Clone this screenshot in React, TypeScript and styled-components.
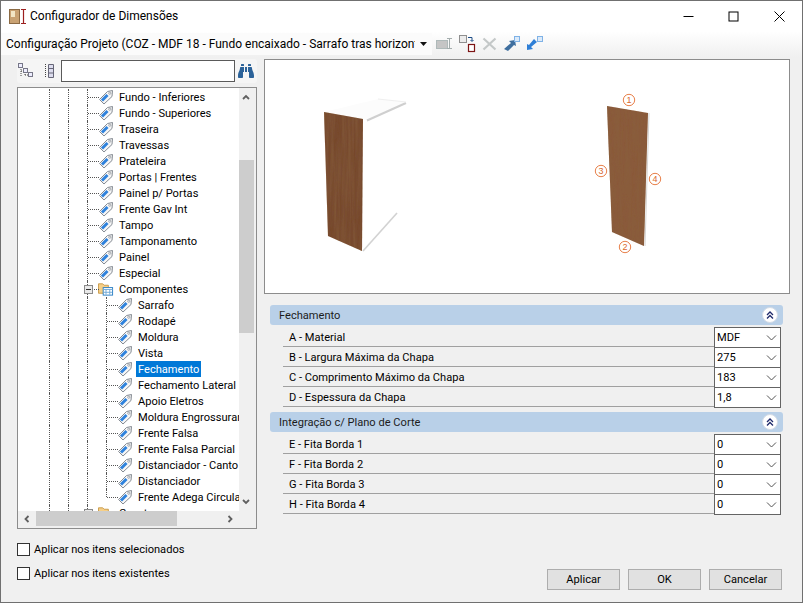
import React from 'react';
import styled, {createGlobalStyle} from 'styled-components';
import {FaBinoculars} from 'react-icons/fa';

const GlobalStyle = createGlobalStyle`
  html, body {
    margin: 0;
    padding: 0;
    background: #f0f0f0;
  }
  body {
    font-family: Roboto, "Liberation Sans", sans-serif;
    font-size: 11.1px;
    color: #000;
  }
`;

const Window = styled.div`
  box-sizing: border-box;
  width: 803px;
  height: 603px;
  display: flex;
  flex-direction: column;
  border: 1px solid #707070;
  background: #f0f0f0;
  overflow: hidden;
`;

const TitleBar = styled.div`
  height: 30px;
  flex: none;
  display: flex;
  align-items: center;
  background: #fff;
  padding-left: 8px;
  font-size: 12px;
`;

const TitleText = styled.span`
  flex: 1;
  margin-left: 3px;
`;

const WinButton = styled.div`
  width: 45.5px;
  height: 30px;
  display: flex;
  align-items: center;
  justify-content: center;
`;

const Toolbar = styled.div`
  height: 26px;
  flex: none;
  display: flex;
  align-items: center;
  background: linear-gradient(#fff, #f0f0f0);
`;

const ProjectCombo = styled.div`
  width: 431px;
  height: 22px;
  flex: none;
  display: flex;
  align-items: center;
  justify-content: space-between;
  background: #fbfbfb;
  padding: 0 5px;
  box-sizing: border-box;
  font-size: 12px;
  white-space: nowrap;
  overflow: hidden;
`;

const ProjectText = styled.span`
  width: 409px;
  overflow: hidden;
`;

const ToolIcons = styled.div`
  display: flex;
  align-items: center;
  gap: 6px;
  margin-left: 4px;
`;

const Body = styled.div`
  flex: 1;
  display: flex;
  min-height: 0;
  padding-left: 16px;
`;

const LeftColumn = styled.div`
  width: 240px;
  flex: none;
  display: flex;
  flex-direction: column;
`;

const SearchRow = styled.div`
  height: 24px;
  margin-top: 2px;
  display: flex;
  align-items: center;
  background: #f5f5f5;
  border-radius: 3px;
`;

const SearchInput = styled.div`
  box-sizing: border-box;
  width: 174px;
  height: 22px;
  margin-left: 6px;
  border: 1px solid #5a5a5a;
  background: #fff;
`;

const SearchIcon = styled.div`
  display: flex;
  margin-left: 3px;
  color: #2b6299;
`;

const Tree = styled.div`
  box-sizing: border-box;
  width: 240px;
  height: 442px;
  margin-top: 4px;
  border: 1px solid #8c8c8c;
  background: #fff;
  display: grid;
  grid-template-columns: 221px 17px;
  grid-template-rows: 423px 17px;
`;

const TreeView = styled.div`
  overflow: hidden;
  padding: 1px 0 0 31px;
`;

const TreeRowBox = styled.div`
  height: 16px;
  display: flex;
  white-space: nowrap;
`;

const Guide = styled.span`
  width: 19px;
  height: 16px;
  flex: none;
  box-sizing: border-box;
  border-left: 1px dotted #555;
`;

const Branch = styled.span<{$last?: boolean}>`
  position: relative;
  width: 11px;
  height: ${p => (p.$last ? '8px' : '16px')};
  flex: none;
  box-sizing: border-box;
  border-left: 1px dotted #555;
  &::after {
    content: '';
    position: absolute;
    left: 0;
    top: 8px;
    width: 11px;
    border-top: 1px dotted #555;
  }
`;

const Expander = styled.span`
  position: absolute;
  left: -4px;
  top: 4px;
  z-index: 1;
  box-sizing: border-box;
  width: 9px;
  height: 9px;
  border: 1px solid #8a8a8a;
  background: #e9e9e9;
  display: flex;
  align-items: center;
  justify-content: center;
  &::before {
    content: '';
    width: 5px;
    border-top: 1px solid #333;
  }
`;

const TreeLabel = styled.span<{$selected?: boolean}>`
  box-sizing: border-box;
  height: 16px;
  line-height: 15px;
  padding: 1px 2px 0;
  margin-left: 3px;
  background: ${p => (p.$selected ? '#0078d7' : 'transparent')};
  color: ${p => (p.$selected ? '#fff' : '#000')};
`;

const VScroll = styled.div`
  background: #f0f0f0;
  display: flex;
  flex-direction: column;
  align-items: center;
  position: relative;
`;

const VThumb = styled.div`
  width: 15px;
  height: 173px;
  margin-top: 72px;
  margin-right: 2px;
  background: #cdcdcd;
`;

const ScrollArrow = styled.div<{$at: string}>`
  position: absolute;
  display: flex;
  ${p => p.$at};
`;

const HScroll = styled.div`
  grid-column: 1 / 3;
  background: #f0f0f0;
  position: relative;
`;

const HThumb = styled.div`
  width: 141px;
  height: 15px;
  margin-left: 18px;
  background: #cdcdcd;
`;

const Options = styled.div`
  display: flex;
  flex-direction: column;
  gap: 11px;
  margin-top: 14px;
`;

const Option = styled.label`
  display: flex;
  align-items: center;
  gap: 4px;
  height: 13px;
`;

const CheckBox = styled.span`
  box-sizing: border-box;
  width: 13px;
  height: 13px;
  border: 1px solid #333;
  background: #fff;
`;

const RightColumn = styled.div`
  flex: 1;
  display: flex;
  flex-direction: column;
  margin-left: 7px;
  min-width: 0;
`;

const Preview = styled.div`
  box-sizing: border-box;
  width: 526px;
  height: 235px;
  margin-top: 2px;
  border: 1px solid #8c8c8c;
  background: #fff;
  flex: none;
`;

const PreviewArt = styled.svg`
  display: block;
  width: 524px;
  height: 233px;
`;

const Sections = styled.div`
  margin: 11px 0 0 6px;
  width: 513px;
`;

const SectionBox = styled.div`
  margin-bottom: 5px;
`;

const SectionHeader = styled.div`
  height: 20px;
  display: flex;
  align-items: center;
  justify-content: space-between;
  padding: 0 5px 0 9px;
  background: #b9d0e8;
  border-radius: 3px;
  color: #1c1c1c;
`;

const Collapse = styled.span`
  box-sizing: border-box;
  width: 16px;
  height: 16px;
  border-radius: 50%;
  background: #fff;
  border: 1px solid #d4dce6;
  display: flex;
  align-items: center;
  justify-content: center;
`;

const SectionRows = styled.div`
  margin: 2px 0 0 13px;
  width: 498px;
`;

const PropRow = styled.div`
  box-sizing: border-box;
  height: 20px;
  display: flex;
  justify-content: space-between;
  align-items: center;
  padding-left: 6px;
  border-bottom: 1px solid #a0a0a0;
`;

const PropName = styled.span`
  padding-top: 2px;
`;

const Combo = styled.div`
  box-sizing: border-box;
  width: 67px;
  height: 21px;
  align-self: flex-start;
  display: flex;
  align-items: center;
  justify-content: space-between;
  padding: 0 3px 0 2px;
  background: #fff;
  border: 1px solid #646464;
`;

const Buttons = styled.div`
  margin-top: auto;
  margin-bottom: 12px;
  margin-left: 283px;
  display: flex;
  gap: 8px;
`;

const Button = styled.button`
  box-sizing: border-box;
  width: 73px;
  height: 21px;
  padding: 0;
  font: inherit;
  color: #000;
  background: #e1e1e1;
  border: 1px solid #adadad;
`;

function TagIcon() {
    return (
        <svg width="16" height="16" viewBox="0 0 16 16" style={{flex: 'none'}}>
            <path d="M1.5 10.5 L9.5 2.5 L14.5 1.5 L14 7.5 L6 15 Z" fill="#f6f6f6" stroke="#858b93"/>
            <path d="M4 11.5 L9.5 6" stroke="#2f82dc" strokeWidth="3"/>
            <circle cx="11.8" cy="4.2" r="1.1" fill="#fff" stroke="#858b93" strokeWidth=".7"/>
        </svg>
    );
}

function FolderIcon() {
    return (
        <svg width="16" height="16" viewBox="0 0 17 16" style={{flex: 'none'}}>
            <path d="M0.5 2.5 H5 L6.5 4 H11 V12.5 H0.5 Z" fill="#f6cf87" stroke="#c99a4a"/>
            <rect x="5.5" y="6.5" width="10" height="8" fill="#fff" stroke="#2a7fc4"/>
            <path d="M5.5 8.5 H15.5 M8.5 8.5 V14 M12.5 8.5 V14 M6 11.5 H15" stroke="#6fa9d8" strokeWidth="1"/>
        </svg>
    );
}

function Chevron({dir}: {dir: 'up' | 'down' | 'left' | 'right'}) {
    const points = {
        up: '2,7 5,4 8,7',
        down: '2,3 5,6 8,3',
        left: '6.5,2 3.5,5 6.5,8',
        right: '3.5,2 6.5,5 3.5,8',
    }[dir];
    return (
        <svg width="10" height="10" viewBox="0 0 10 10">
            <polyline points={points} fill="none" stroke="#606060" strokeWidth="1.8"/>
        </svg>
    );
}

function ComboArrow() {
    return (
        <svg width="11" height="6" viewBox="0 0 11 6">
            <polyline points="1,0.5 5.5,5 10,0.5" fill="none" stroke="#555" strokeWidth="1"/>
        </svg>
    );
}

type TreeRowProps = {
    label: string;
    level: number;
    selected?: boolean;
    last?: boolean;
    folder?: boolean;
};

function TreeRow({label, level, selected, last, folder}: TreeRowProps) {
    const guides = Array.from({length: level}, (_, i) => <Guide key={i}/>);
    return (
        <TreeRowBox>
            {guides}
            <Branch $last={last}>{folder && <Expander/>}</Branch>
            {folder ? <FolderIcon/> : <TagIcon/>}
            <TreeLabel $selected={selected}>{label}</TreeLabel>
        </TreeRowBox>
    );
}

const treeItems: TreeRowProps[] = [
    {label: 'Fundo - Inferiores', level: 2},
    {label: 'Fundo - Superiores', level: 2},
    {label: 'Traseira', level: 2},
    {label: 'Travessas', level: 2},
    {label: 'Prateleira', level: 2},
    {label: 'Portas | Frentes', level: 2},
    {label: 'Painel p/ Portas', level: 2},
    {label: 'Frente Gav Int', level: 2},
    {label: 'Tampo', level: 2},
    {label: 'Tamponamento', level: 2},
    {label: 'Painel', level: 2},
    {label: 'Especial', level: 2},
    {label: 'Componentes', level: 2, folder: true},
    {label: 'Sarrafo', level: 3},
    {label: 'Rodapé', level: 3},
    {label: 'Moldura', level: 3},
    {label: 'Vista', level: 3},
    {label: 'Fechamento', level: 3, selected: true},
    {label: 'Fechamento Lateral', level: 3},
    {label: 'Apoio Eletros', level: 3},
    {label: 'Moldura Engrossuramento', level: 3},
    {label: 'Frente Falsa', level: 3},
    {label: 'Frente Falsa Parcial', level: 3},
    {label: 'Distanciador - Canto', level: 3},
    {label: 'Distanciador', level: 3},
    {label: 'Frente Adega Circular', level: 3, last: true},
    {label: 'Gavetas', level: 2, folder: true},
];

const sections = [
    {
        title: 'Fechamento',
        rows: [
            ['A - Material', 'MDF'],
            ['B - Largura Máxima da Chapa', '275'],
            ['C - Comprimento Máximo da Chapa', '183'],
            ['D - Espessura da Chapa', '1,8'],
        ],
    },
    {
        title: 'Integração c/ Plano de Corte',
        rows: [
            ['E - Fita Borda 1', '0'],
            ['F - Fita Borda 2', '0'],
            ['G - Fita Borda 3', '0'],
            ['H - Fita Borda 4', '0'],
        ],
    },
];

function Marker({x, y, n}: {x: number; y: number; n: number}) {
    return (
        <g>
            <circle cx={x} cy={y} r="5.7" fill="#fff" stroke="#e8804a" strokeWidth="1"/>
            <text x={x} y={y + 3} textAnchor="middle" fontSize="9" fill="#d9692e" fontFamily="Liberation Sans, sans-serif">{n}</text>
        </g>
    );
}

function PreviewDrawing() {
    return (
        <PreviewArt viewBox="265 60 524 233">
            <defs>
                <filter id="grain" x="0" y="0" width="100%" height="100%">
                    <feTurbulence type="fractalNoise" baseFrequency="0.35 0.02" numOctaves="2" seed="4"/>
                    <feColorMatrix values="0 0 0 0 0.25  0 0 0 0 0.12  0 0 0 0 0.05  0.9 0 0 0 -0.25"/>
                    <feComposite in2="SourceGraphic" operator="in"/>
                    <feMerge>
                        <feMergeNode in="SourceGraphic"/>
                        <feMergeNode/>
                    </feMerge>
                </filter>
            </defs>
            <path d="M324 112 L368 120 L406 103 L378 99 Z" fill="#fcfcfc"/>
            <path d="M367 120.5 L406 103" stroke="#cfcfcf" strokeWidth="2"/>
            <path d="M378 99 L406 102" stroke="#efefef" strokeWidth="1"/>
            <path d="M363 251 L397 213" stroke="#d2d2d2" strokeWidth="1.6"/>
            <path d="M324 112 L363 119 L362 251 L328 236 Z" fill="#774a2e" filter="url(#grain)"/>
            <path d="M607 106 L648 113 L644 246 L612 232 Z" fill="#8a5a3a" filter="url(#grain)"/>
            <path d="M648 113 L644 246" stroke="#d6d6d6" strokeWidth="1" transform="translate(1 0)"/>
            <Marker x={629} y={100} n={1}/>
            <Marker x={625} y={247} n={2}/>
            <Marker x={601} y={171} n={3}/>
            <Marker x={655} y={179} n={4}/>
        </PreviewArt>
    );
}

export default function App() {
    return (
        <Window>
            <GlobalStyle/>
            <TitleBar>
                <svg width="18" height="17" viewBox="0 0 18 17">
                    <rect x="0.5" y="1.5" width="10" height="14" fill="#c9a273" stroke="#8b6a44"/>
                    <rect x="2" y="3" width="4" height="6" fill="#f3e6c6"/>
                    <path d="M12 1.5 H17 M14.5 1.5 V15.5 M12 15.5 H17" stroke="#9c1f1f" strokeWidth="1.2" fill="none"/>
                </svg>
                <TitleText>Configurador de Dimensões</TitleText>
                <WinButton>
                    <svg width="11" height="11" viewBox="0 0 11 11"><path d="M0.5 5.5 H10.5" stroke="#000"/></svg>
                </WinButton>
                <WinButton>
                    <svg width="11" height="11" viewBox="0 0 11 11"><rect x="1" y="1" width="9" height="9" fill="none" stroke="#000"/></svg>
                </WinButton>
                <WinButton>
                    <svg width="11" height="11" viewBox="0 0 11 11"><path d="M0.5 0.5 L10.5 10.5 M10.5 0.5 L0.5 10.5" stroke="#000"/></svg>
                </WinButton>
            </TitleBar>

            <Toolbar>
                <ProjectCombo>
                    <ProjectText>Configuração Projeto (COZ - MDF 18 - Fundo encaixado - Sarrafo tras horizontal</ProjectText>
                    <svg width="7" height="4" viewBox="0 0 7 4"><path d="M0 0 H7 L3.5 4 Z" fill="#111"/></svg>
                </ProjectCombo>
                <ToolIcons>
                    <svg width="17" height="14" viewBox="0 0 17 14">
                        <rect x="0.5" y="3.5" width="11" height="8" fill="#c5c5c5" stroke="#aeb9b9"/>
                        <path d="M11 1.5 H16 M13.5 1.5 V11.5 M11 11.5 H16" stroke="#a4adad" fill="none"/>
                    </svg>
                    <svg width="17" height="18" viewBox="0 0 17 18">
                        <rect x="0.5" y="0.5" width="7" height="7" fill="#ececec" stroke="#8f8f8f"/>
                        <path d="M9 2.5 H13 V6 M11.5 5 L13 6.5 L14.5 5" stroke="#1d4c86" fill="none"/>
                        <rect x="9.5" y="9.5" width="6" height="7" fill="#fff" stroke="#7d1414" strokeWidth="1.2"/>
                    </svg>
                    <svg width="15" height="14" viewBox="0 0 15 14">
                        <path d="M1.5 1.5 L13.5 12.5 M13.5 1.5 L1.5 12.5" stroke="#c4c8c8" strokeWidth="2.2"/>
                    </svg>
                    <svg width="17" height="16" viewBox="0 0 17 16">
                        <path d="M1 13 L5 15 L11 9 L13 10 L12 4 L6 5 L8 7 Z" fill="#3f6f9f"/>
                        <rect x="11.5" y="0.5" width="5" height="5" fill="#dbeafa" stroke="#7fb2e6"/>
                    </svg>
                    <svg width="17" height="16" viewBox="0 0 17 16">
                        <path d="M1 14 L7 13 L5 11 L11 6 L8 3 L3 9 L1 8 Z" fill="#2f7fd6"/>
                        <rect x="11.5" y="0.5" width="5" height="5" fill="#dbeafa" stroke="#7fb2e6"/>
                    </svg>
                </ToolIcons>
            </Toolbar>

            <Body>
                <LeftColumn>
                    <SearchRow>
                        <svg width="16" height="16" viewBox="0 0 16 16" style={{marginLeft: 1}}>
                            <path d="M3 4 V14 M3 8 H6 M7 9 V13 M7 12 H10" stroke="#444" strokeDasharray="1 1" fill="none"/>
                            <rect x="0.5" y="0.5" width="4" height="4" fill="#eef" stroke="#778"/>
                            <rect x="5.5" y="5.5" width="4" height="4" fill="#eef" stroke="#778"/>
                            <rect x="10.5" y="9.5" width="4" height="4" fill="#eef" stroke="#778"/>
                        </svg>
                        <svg width="11" height="16" viewBox="0 0 11 16" style={{marginLeft: 10}}>
                            <path d="M1.5 1 V15" stroke="#444" strokeDasharray="1 1"/>
                            <path d="M4.5 1.5 H9.5 V14.5 H4.5 Z M4.5 5.5 H9.5 M4.5 10 H9.5" fill="#dde" stroke="#667"/>
                        </svg>
                        <SearchInput/>
                        <SearchIcon><FaBinoculars size={16}/></SearchIcon>
                    </SearchRow>
                    <Tree>
                        <TreeView>
                            {treeItems.map(item => <TreeRow key={item.label} {...item}/>)}
                        </TreeView>
                        <VScroll>
                            <VThumb/>
                            <ScrollArrow $at="left: 2px; top: 4px;"><Chevron dir="up"/></ScrollArrow>
                            <ScrollArrow $at="left: 2px; bottom: 4px;"><Chevron dir="down"/></ScrollArrow>
                        </VScroll>
                        <HScroll>
                            <HThumb/>
                            <ScrollArrow $at="left: 4px; top: 3px;"><Chevron dir="left"/></ScrollArrow>
                            <ScrollArrow $at="right: 21px; top: 3px;"><Chevron dir="right"/></ScrollArrow>
                        </HScroll>
                    </Tree>
                    <Options>
                        <Option><CheckBox/>Aplicar nos itens selecionados</Option>
                        <Option><CheckBox/>Aplicar nos itens existentes</Option>
                    </Options>
                </LeftColumn>

                <RightColumn>
                    <Preview><PreviewDrawing/></Preview>
                    <Sections>
                        {sections.map(section => (
                            <SectionBox key={section.title}>
                                <SectionHeader>
                                    {section.title}
                                    <Collapse>
                                        <svg width="10" height="10" viewBox="0 0 10 10">
                                            <path d="M2 5 L5 2 L8 5 M2 8.5 L5 5.5 L8 8.5" fill="none" stroke="#1f2a6b" strokeWidth="1.3"/>
                                        </svg>
                                    </Collapse>
                                </SectionHeader>
                                <SectionRows>
                                    {section.rows.map(([name, value]) => (
                                        <PropRow key={name}>
                                            <PropName>{name}</PropName>
                                            <Combo>{value}<ComboArrow/></Combo>
                                        </PropRow>
                                    ))}
                                </SectionRows>
                            </SectionBox>
                        ))}
                    </Sections>
                    <Buttons>
                        <Button>Aplicar</Button>
                        <Button>OK</Button>
                        <Button>Cancelar</Button>
                    </Buttons>
                </RightColumn>
            </Body>
        </Window>
    );
}
